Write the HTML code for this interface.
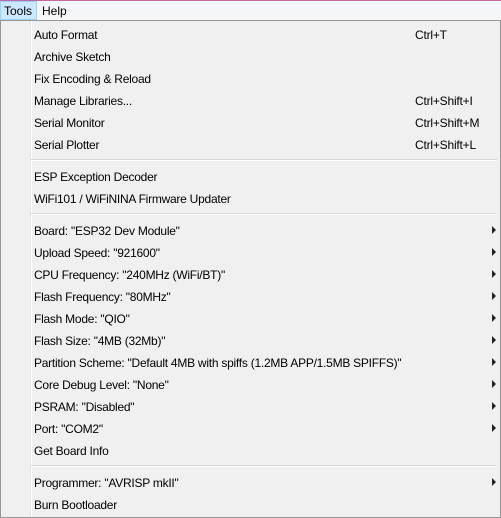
<!DOCTYPE html>
<html><head><style>
*{margin:0;padding:0;box-sizing:border-box}
body{width:501px;height:518px;overflow:hidden;background:#f0f0f0;font-family:"Liberation Sans",sans-serif;font-size:12px;color:#000;position:relative}
.top{position:absolute;left:0;top:0;width:501px;height:1px;background:#c06aa0}
.bar{position:absolute;left:0;top:1px;width:501px;height:19px;background:#f5f6f7}
.tools{position:absolute;left:0;top:1px;width:37px;height:19px;background:#cce8ff;border:1px solid #99d1ff}
.mt{position:absolute;top:4px}
.menu{position:absolute;left:0;top:20px;width:501px;height:498px;border:1px solid #979797;background:#f0f0f0}
.gut{position:absolute;left:30px;top:21px;width:1px;height:496px;background:#e2e2e2}
.gut2{position:absolute;left:31px;top:21px;width:1px;height:496px;background:#fff}
.it{position:absolute;left:34px;height:22px;line-height:22px;white-space:nowrap;margin-top:1px;letter-spacing:-0.25px}
.sc{position:absolute;left:415px;height:22px;line-height:22px;margin-top:1px;letter-spacing:-0.2px}
.ar{position:absolute;left:492px;width:0;height:0;border-top:4px solid transparent;border-bottom:4px solid transparent;border-left:4px solid #222}
.sep{position:absolute;left:31px;width:466px;height:1px;background:#d7d7d7}
.sep2{position:absolute;left:31px;width:466px;height:1px;background:#fff}
</style></head><body>
<div class="top"></div><div class="bar"></div><div class="tools"></div>
<div class="mt" style="left:4px">Tools</div><div class="mt" style="left:42px">Help</div>
<div class="menu"></div><div class="gut"></div><div class="gut2"></div>
<div class="it" style="top:23px">Auto Format</div><div class="sc" style="top:23px">Ctrl+T</div>
<div class="it" style="top:45px">Archive Sketch</div>
<div class="it" style="top:67px">Fix Encoding &amp; Reload</div>
<div class="it" style="top:89px">Manage Libraries...</div><div class="sc" style="top:89px">Ctrl+Shift+I</div>
<div class="it" style="top:111px">Serial Monitor</div><div class="sc" style="top:111px">Ctrl+Shift+M</div>
<div class="it" style="top:133px">Serial Plotter</div><div class="sc" style="top:133px">Ctrl+Shift+L</div>
<div class="sep" style="top:159px"></div><div class="sep2" style="top:160px"></div>
<div class="it" style="top:165px">ESP Exception Decoder</div>
<div class="it" style="top:187px">WiFi101 / WiFiNINA Firmware Updater</div>
<div class="sep" style="top:213px"></div><div class="sep2" style="top:214px"></div>
<div class="it" style="top:219px">Board: "ESP32 Dev Module"</div><div class="ar" style="top:226px"></div>
<div class="it" style="top:241px">Upload Speed: "921600"</div><div class="ar" style="top:248px"></div>
<div class="it" style="top:263px">CPU Frequency: "240MHz (WiFi/BT)"</div><div class="ar" style="top:270px"></div>
<div class="it" style="top:285px">Flash Frequency: "80MHz"</div><div class="ar" style="top:292px"></div>
<div class="it" style="top:307px">Flash Mode: "QIO"</div><div class="ar" style="top:314px"></div>
<div class="it" style="top:329px">Flash Size: "4MB (32Mb)"</div><div class="ar" style="top:336px"></div>
<div class="it" style="top:351px">Partition Scheme: "Default 4MB with spiffs (1.2MB APP/1.5MB SPIFFS)"</div><div class="ar" style="top:358px"></div>
<div class="it" style="top:373px">Core Debug Level: "None"</div><div class="ar" style="top:380px"></div>
<div class="it" style="top:395px">PSRAM: "Disabled"</div><div class="ar" style="top:402px"></div>
<div class="it" style="top:417px">Port: "COM2"</div><div class="ar" style="top:424px"></div>
<div class="it" style="top:439px">Get Board Info</div>
<div class="sep" style="top:465px"></div><div class="sep2" style="top:466px"></div>
<div class="it" style="top:471px">Programmer: "AVRISP mkII"</div><div class="ar" style="top:478px"></div>
<div class="it" style="top:493px">Burn Bootloader</div>
</body></html>
